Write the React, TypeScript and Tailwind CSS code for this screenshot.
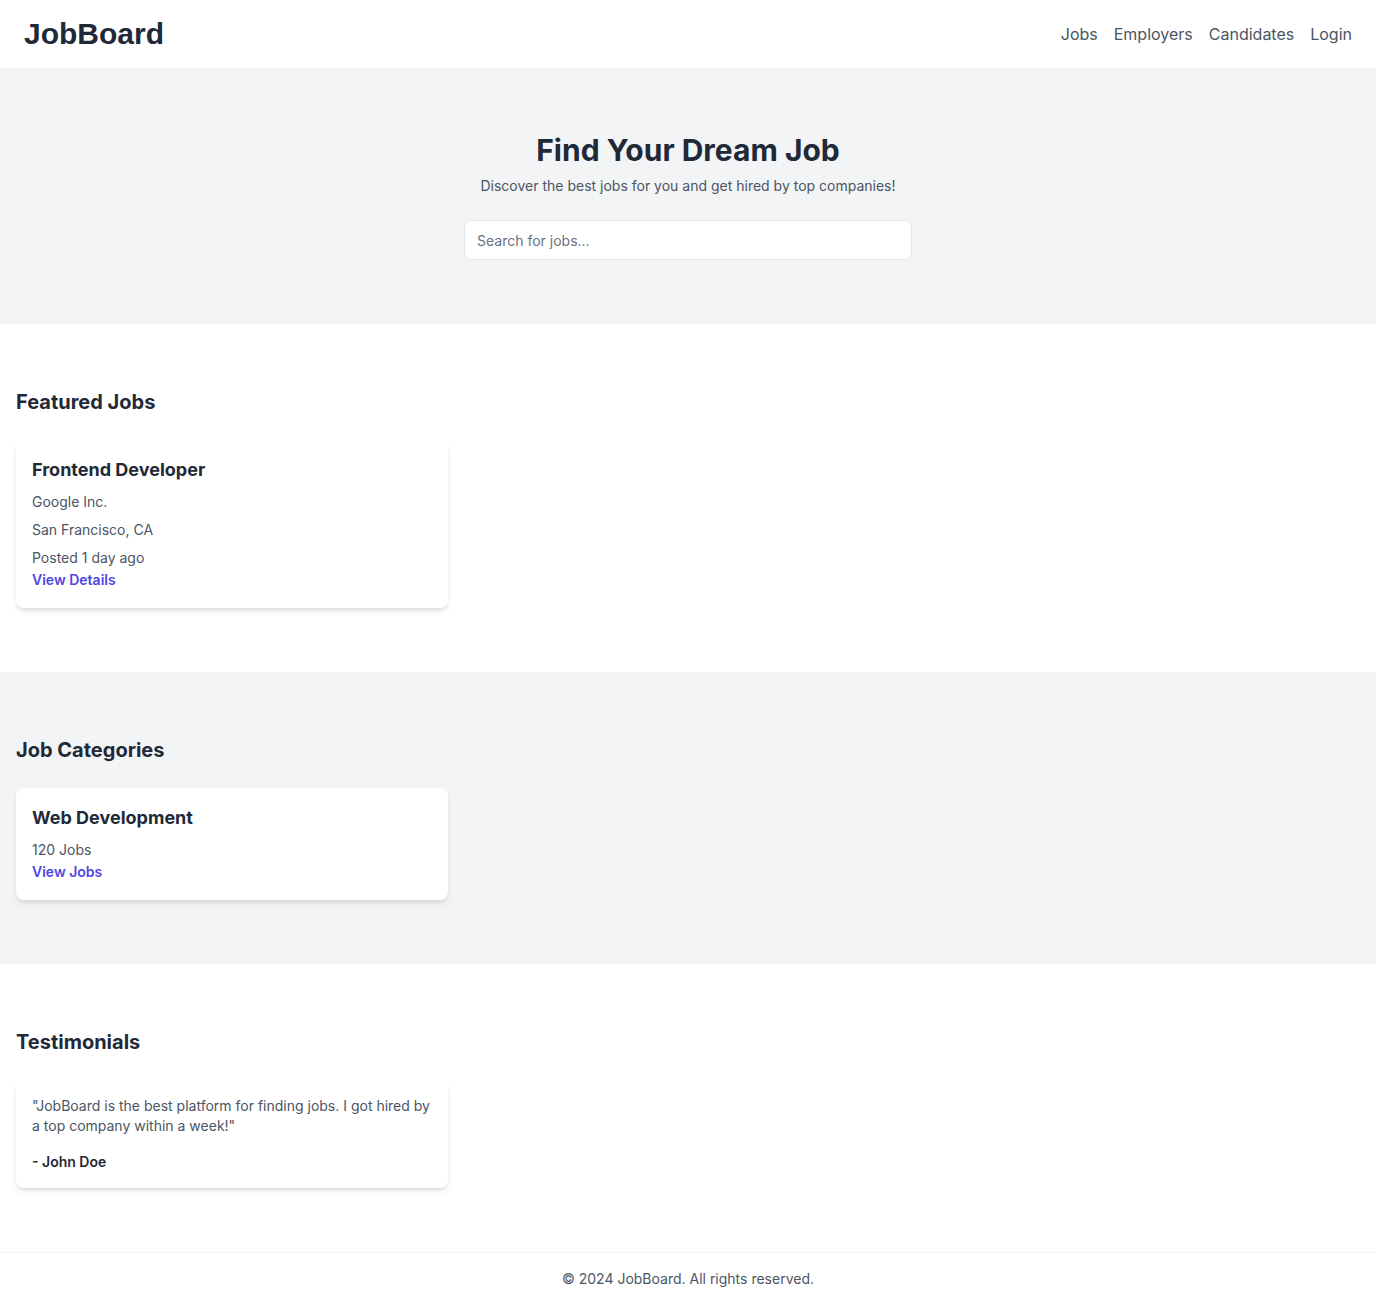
import React from "react";

export default function App() {
  const font = { fontFamily: "Inter, 'Noto Sans', sans-serif" };
  return (
    <div className="min-h-screen bg-white text-[#1f2937]" style={font}>
      <header className="flex items-center justify-between bg-white px-6 py-4">
        <div className="text-3xl font-bold text-[#1f2937]" style={{ fontFamily: "'Liberation Sans', Arial, sans-serif" }}>
          JobBoard
        </div>
        <nav className="flex items-center gap-4 text-base text-[#4b5563]">
          <a href="#">Jobs</a>
          <a href="#">Employers</a>
          <a href="#">Candidates</a>
          <a href="#">Login</a>
        </nav>
      </header>

      <section className="bg-[#f3f4f6] py-16 text-center">
        <h1 className="text-3xl font-bold text-[#1f2937]">Find Your Dream Job</h1>
        <p className="mt-2 text-sm text-[#4b5563]">Discover the best jobs for you and get hired by top companies!</p>
        <div className="mx-auto mt-6 max-w-md">
          <input
            type="text"
            placeholder="Search for jobs..."
            className="h-10 w-full rounded-md border border-[#e5e7eb] bg-white px-3 text-sm text-[#374151] placeholder:text-[#6b7280] outline-none"
          />
        </div>
      </section>

      <section className="bg-white px-4 py-16">
        <h2 className="mb-6 text-xl font-bold text-[#1f2937]">Featured Jobs</h2>
        <div className="grid grid-cols-3 gap-6">
          <div className="rounded-lg bg-white p-4 shadow-md">
            <h3 className="text-lg font-bold text-[#1f2937]">Frontend Developer</h3>
            <p className="mt-2 text-sm text-[#4b5563]">Google Inc.</p>
            <p className="mt-2 text-sm text-[#4b5563]">San Francisco, CA</p>
            <p className="mt-2 text-sm text-[#4b5563]">Posted 1 day ago</p>
            <a href="#" className="mt-0.5 block pb-0.5 text-sm font-semibold text-[#4f46e5]">View Details</a>
          </div>
        </div>
      </section>

      <section className="bg-[#f3f4f6] px-4 py-16">
        <h2 className="mb-6 text-xl font-bold text-[#1f2937]">Job Categories</h2>
        <div className="grid grid-cols-3 gap-6">
          <div className="rounded-lg bg-white p-4 shadow-md">
            <h3 className="text-lg font-bold text-[#1f2937]">Web Development</h3>
            <p className="mt-2 text-sm text-[#4b5563]">120 Jobs</p>
            <a href="#" className="mt-0.5 block pb-0.5 text-sm font-semibold text-[#4f46e5]">View Jobs</a>
          </div>
        </div>
      </section>

      <section className="bg-white px-4 py-16">
        <h2 className="mb-6 text-xl font-bold text-[#1f2937]">Testimonials</h2>
        <div className="grid grid-cols-3 gap-6">
          <div className="rounded-lg bg-white p-4 shadow-md">
            <p className="text-sm text-[#4b5563]">"JobBoard is the best platform for finding jobs. I got hired by a top company within a week!"</p>
            <p className="mt-4 text-sm font-semibold text-[#1f2937]">- John Doe</p>
          </div>
        </div>
      </section>

      <footer className="border-t border-[#f3f4f6] bg-white py-4 text-center text-sm text-[#4b5563]">
        © 2024 JobBoard. All rights reserved.
      </footer>
    </div>
  );
}
